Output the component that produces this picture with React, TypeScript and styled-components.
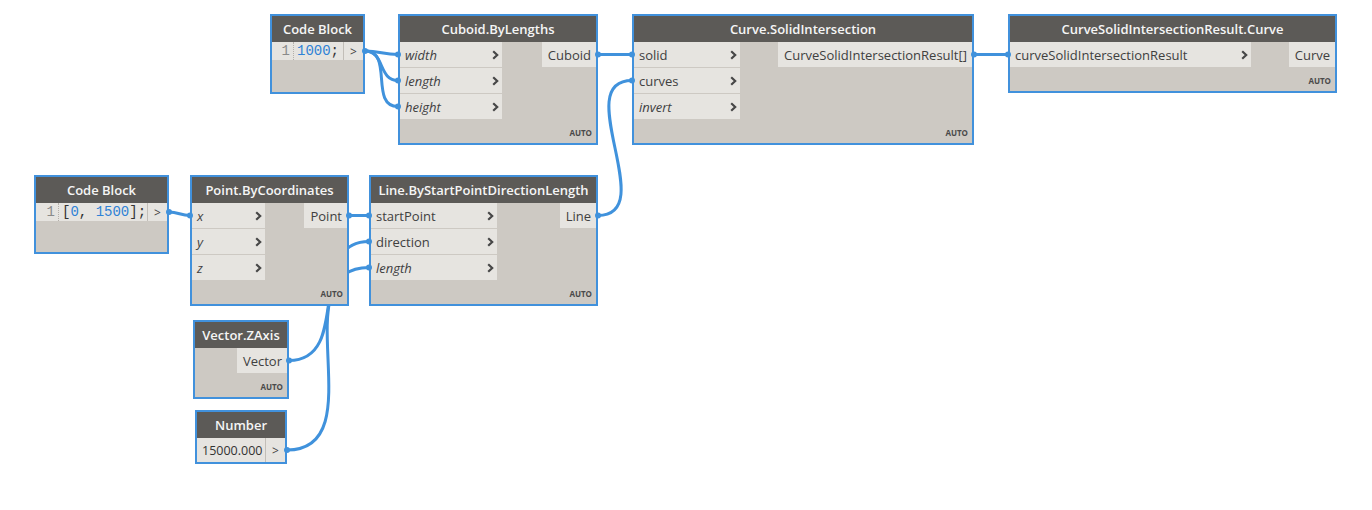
import React from 'react';
import styled, { createGlobalStyle } from 'styled-components';

const GlobalStyle = createGlobalStyle`
  html, body { margin: 0; padding: 0; background: #ffffff; }
  body { font-family: "Open Sans", "Liberation Sans", sans-serif; }
`;

const WIRE = '#4092dc';

const Canvas = styled.div`
  position: relative;
  width: 1372px;
  height: 510px;
  background: #ffffff;
  overflow: hidden;
`;

const Layer = styled.svg<{ $z: number }>`
  position: absolute;
  left: 0;
  top: 0;
  width: 1372px;
  height: 510px;
  z-index: ${(p) => p.$z};
  pointer-events: none;
`;

const NodeBox = styled.div<{ $x: number; $y: number; $w: number; $h: number }>`
  position: absolute;
  left: ${(p) => p.$x}px;
  top: ${(p) => p.$y}px;
  width: ${(p) => p.$w}px;
  height: ${(p) => p.$h}px;
  box-sizing: border-box;
  border: 2px solid #4191dc;
  background: #cdc9c3;
  display: flex;
  flex-direction: column;
  z-index: 1;
`;

const Header = styled.div`
  flex: none;
  height: 26px;
  background: #5c5a57;
  color: #f5f5f5;
  font-size: 13px;
  font-weight: 600;
  display: flex;
  align-items: center;
  justify-content: center;
  white-space: nowrap;
`;

const Ports = styled.div`
  display: flex;
  justify-content: space-between;
  align-items: flex-start;
`;

const InputCol = styled.div<{ $w: number }>`
  width: ${(p) => p.$w}px;
  display: flex;
  flex-direction: column;
  gap: 1px;
`;

const Label = styled.span<{ $italic?: boolean }>`
  font-size: 13px;
  color: #404040;
  font-style: ${(p) => (p.$italic ? 'italic' : 'normal')};
  white-space: nowrap;
`;

const InputRow = styled.div`
  height: 25px;
  background: #e6e4e0;
  display: flex;
  align-items: center;
  justify-content: space-between;
  padding: 0 3px 0 5px;
`;

const OutputCol = styled.div`
  display: flex;
  flex-direction: column;
  align-items: flex-end;
  gap: 1px;
`;

const OutputRow = styled.div`
  height: 25px;
  background: #e6e4e0;
  display: flex;
  align-items: center;
  padding: 0 5px 0 6px;
`;

const Footer = styled.div`
  flex: 1;
  display: flex;
  align-items: flex-end;
  justify-content: flex-end;
  padding: 0 4px 5px 0;
`;

const Auto = styled.span`
  font-size: 8px;
  line-height: 10px;
  font-weight: 700;
  color: #4a4a4a;
`;

const CodeRow = styled.div`
  display: flex;
  height: 18px;
  background: #e6e4e0;
`;

const Gutter = styled.div<{ $w: number }>`
  width: ${(p) => p.$w}px;
  box-sizing: border-box;
  border-right: 1px dotted #b4afa9;
  color: #8a8a8a;
  font-family: "Liberation Mono", "DejaVu Sans Mono", monospace;
  font-size: 14px;
  line-height: 18px;
  text-align: right;
  padding-right: 3px;
`;

const Code = styled.div`
  flex: 1;
  font-family: "Liberation Mono", "DejaVu Sans Mono", monospace;
  font-size: 14px;
  line-height: 18px;
  color: #333333;
  padding-left: 3px;
  white-space: pre;
`;

const NumTok = styled.span`
  color: #2f82d6;
`;

const RunButton = styled.div`
  width: 19px;
  flex: none;
  border-left: 1px solid #c2beb8;
  display: flex;
  align-items: center;
  justify-content: center;
  font-size: 12px;
  color: #444444;
`;

const ValueRow = styled.div`
  display: flex;
  height: 24px;
  background: #e6e4e0;
`;

const ValueField = styled.div`
  flex: 1;
  display: flex;
  align-items: center;
  padding-left: 5px;
  font-size: 12.5px;
  color: #333333;
`;

const Chevron = () => (
  <svg width="7" height="10" viewBox="0 0 7 10">
    <polyline points="1.2,1.2 5.2,5 1.2,8.8" fill="none" stroke="#474747" strokeWidth="2.2" />
  </svg>
);

type Port = { name: string; italic?: boolean };

type NodeProps = {
  x: number;
  y: number;
  w: number;
  h: number;
  title: string;
  inputs?: Port[];
  outputs?: string[];
  inW?: number;
  auto?: boolean;
  children?: React.ReactNode;
};

const Node = ({ x, y, w, h, title, inputs = [], outputs = [], inW = 0, auto, children }: NodeProps) => (
  <NodeBox $x={x} $y={y} $w={w} $h={h}>
    <Header>{title}</Header>
    {children}
    {(inputs.length > 0 || outputs.length > 0) && (
      <Ports>
        <InputCol $w={inW}>
          {inputs.map((p) => (
            <InputRow key={p.name}>
              <Label $italic={p.italic}>{p.name}</Label>
              <Chevron />
            </InputRow>
          ))}
        </InputCol>
        <OutputCol>
          {outputs.map((o) => (
            <OutputRow key={o}>
              <Label>{o}</Label>
            </OutputRow>
          ))}
        </OutputCol>
      </Ports>
    )}
    {auto && (
      <Footer>
        <Auto>AUTO</Auto>
      </Footer>
    )}
  </NodeBox>
);

type Pt = [number, number];
const wires: [Pt, Pt][] = [
  [[365, 51], [398, 54.5]],
  [[365, 51], [398, 80.5]],
  [[365, 51], [398, 106.5]],
  [[598, 54.5], [632, 54.5]],
  [[974, 54.5], [1008, 54.5]],
  [[169, 212], [190, 215.5]],
  [[349, 215.5], [369, 215.5]],
  [[598, 215.5], [632, 80.5]],
  [[289, 360.5], [369, 241.5]],
  [[287, 450], [369, 267.5]],
];

const wirePath = ([a, b]: [Pt, Pt]) => {
  const d = Math.hypot(b[0] - a[0], b[1] - a[1]) * 0.45;
  return `M${a[0]},${a[1]} C${a[0] + d},${a[1]} ${b[0] - d},${b[1]} ${b[0]},${b[1]}`;
};

const ends: Pt[] = Array.from(
  new Map(wires.flat().map((p) => [p.join(','), p] as [string, Pt])).values()
);

export default function App() {
  return (
    <>
      <GlobalStyle />
      <Canvas>
        <Layer $z={0}>
          {wires.map((w, i) => (
            <path key={i} d={wirePath(w)} fill="none" stroke={WIRE} strokeWidth={3} />
          ))}
        </Layer>

        <Node x={270} y={14} w={95} h={80} title="Code Block">
          <CodeRow>
            <Gutter $w={22}>1</Gutter>
            <Code>
              <NumTok>1000</NumTok>;
            </Code>
            <RunButton>&gt;</RunButton>
          </CodeRow>
        </Node>

        <Node
          x={398}
          y={14}
          w={200}
          h={131}
          title="Cuboid.ByLengths"
          inW={102}
          inputs={[
            { name: 'width', italic: true },
            { name: 'length', italic: true },
            { name: 'height', italic: true },
          ]}
          outputs={['Cuboid']}
          auto
        />

        <Node
          x={632}
          y={14}
          w={342}
          h={131}
          title="Curve.SolidIntersection"
          inW={106}
          inputs={[{ name: 'solid' }, { name: 'curves' }, { name: 'invert', italic: true }]}
          outputs={['CurveSolidIntersectionResult[]']}
          auto
        />

        <Node
          x={1008}
          y={14}
          w={329}
          h={79}
          title="CurveSolidIntersectionResult.Curve"
          inW={241}
          inputs={[{ name: 'curveSolidIntersectionResult' }]}
          outputs={['Curve']}
          auto
        />

        <Node x={34} y={175} w={135} h={79} title="Code Block">
          <CodeRow>
            <Gutter $w={23}>1</Gutter>
            <Code>
              [<NumTok>0</NumTok>, <NumTok>1500</NumTok>];
            </Code>
            <RunButton>&gt;</RunButton>
          </CodeRow>
        </Node>

        <Node
          x={190}
          y={175}
          w={159}
          h={131}
          title="Point.ByCoordinates"
          inW={73}
          inputs={[
            { name: 'x', italic: true },
            { name: 'y', italic: true },
            { name: 'z', italic: true },
          ]}
          outputs={['Point']}
          auto
        />

        <Node
          x={369}
          y={175}
          w={229}
          h={131}
          title="Line.ByStartPointDirectionLength"
          inW={126}
          inputs={[{ name: 'startPoint' }, { name: 'direction' }, { name: 'length', italic: true }]}
          outputs={['Line']}
          auto
        />

        <Node x={193} y={320} w={96} h={79} title="Vector.ZAxis" outputs={['Vector']} auto />

        <Node x={195} y={410} w={92} h={54} title="Number">
          <ValueRow>
            <ValueField>15000.000</ValueField>
            <RunButton>&gt;</RunButton>
          </ValueRow>
        </Node>

        <Layer $z={2}>
          {ends.map((p, i) => (
            <circle key={i} cx={p[0]} cy={p[1]} r={3} fill={WIRE} />
          ))}
        </Layer>
      </Canvas>
    </>
  );
}
